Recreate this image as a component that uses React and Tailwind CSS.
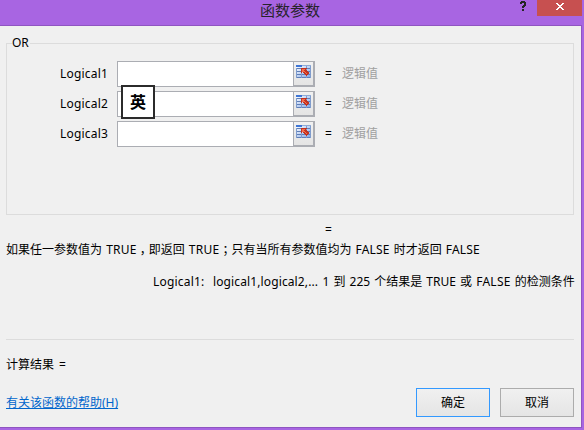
import React from "react";

function SheetIcon() {
  return (
    <svg width="15" height="14" viewBox="0 0 15 14" shapeRendering="crispEdges">
      <defs>
        <linearGradient id="sheet" x1="0" y1="0" x2="1" y2="1">
          <stop offset="0" stopColor="#ffffff" />
          <stop offset="1" stopColor="#7da3e6" />
        </linearGradient>
      </defs>
      <rect x="0" y="1" width="15" height="12" fill="url(#sheet)" />
      <path d="M0 0h6v2H0z" fill="#3f76d6" />
      <path d="M6 0h9v1H6z" fill="#8eabd8" />
      <path d="M0 3h15v1H0zM0 6h15v1H0zM0 9h15v1H0zM0 12h15v1H0z" fill="#5f7fb8" />
      <path d="M5 3h1v10H5zM10 1h1v12h-1zM14 1h1v12h-1zM0 3h1v10H0z" fill="#7f9ccd" />
      <path d="M5 3h6v1h-1v1h1v1h1v1h1v2h-1v1h-1v1h-1v-1H9V9H8V8H7V7H6v1H5z" fill="#c3321f" />
      <path d="M6 4h3v1H8v1h1v1h1v1h1v1h-1V8H9V7H6z" fill="#f16d50" />
    </svg>
  );
}

function ArgumentRow({ name, children }) {
  return (
    <div className="flex h-[26px] items-center">
      <span className="w-[53px] shrink-0 whitespace-nowrap tracking-[0.2px]">{name}</span>
      <div className="relative ml-1 flex h-[26px] w-[198px] shrink-0 border border-[#abadb3] bg-white">
        <span className="-mr-px -mt-px ml-auto flex h-[26px] w-[22px] justify-center border-t border-r-2 border-b-2 border-l border-[#abadb3] bg-gradient-to-b from-[#f1f1f1] to-[#e4e4e4] pt-[3px]">
          <SheetIcon />
        </span>
        {children}
      </div>
      <span className="ml-[10px] w-[17px]">=</span>
      <span className="text-[#a0a0a0]">逻辑值</span>
    </div>
  );
}

export default function App() {
  return (
    <div className="flex h-[430px] w-[584px] flex-col overflow-hidden bg-[#a865e2] font-['Noto_Sans','Noto_Sans_CJK_SC',sans-serif] text-[12px] leading-4 text-black" lang="zh-CN">
      <header className="flex h-[25px] shrink-0 items-start">
        <h1 className="ml-[260px] w-[252px] text-[15px] leading-5 font-normal text-[#27232b]">函数参数</h1>
        <svg className="ml-[8px] mt-px" width="6" height="11" viewBox="0 0 6 11" shapeRendering="crispEdges" fill="#252525">
          <path d="M1 0h4v1h1v4H5v1H4v1H2V5h1V4h1V2H2v1H0V1h1zM2 8h2v2H2z" />
        </svg>
        <button className="ml-[11px] flex h-4 w-[45px] justify-center bg-[#c75050] pt-[3px]">
          <svg width="8" height="7" viewBox="0 0 8 7" shapeRendering="crispEdges" fill="#fff">
            <path d="M0 0h2v1h1v1h2V1h1V0h2v1H7v1H6v1H5v1h1v1h1v1h1v1H6V6H5V5H3v1H2v1H0V6h1V5h1V4h1V3H2V2H1V1H0z" />
          </svg>
        </button>
      </header>

      <main className="flex h-[403px] w-[582px] shrink-0 flex-col border-t border-r border-b border-[#8f55c1] bg-[#f0f0f0] pl-[6px]">
        <fieldset className="mt-[9px] h-[180px] w-[568px] shrink-0 border border-[#dcdcdc] pl-[53px]">
          <legend className="-ml-[48px] pr-px leading-4">OR</legend>
          <div className="mt-[10px] flex flex-col gap-1">
            <ArgumentRow name="Logical1" />
            <ArgumentRow name="Logical2">
              <span className="absolute -top-[7px] left-[3px] z-10 flex h-[34px] w-[34px] items-center justify-center border-2 border-[#2b2b2b] bg-white pb-[3px] font-['Noto_Sans_CJK_SC',sans-serif] text-[16px] leading-none font-bold">英</span>
            </ArgumentRow>
            <ArgumentRow name="Logical3" />
          </div>
        </fieldset>
        <p className="mt-[7px] h-4 pl-[319px]">=</p>
        <p className="mt-1 whitespace-nowrap [word-spacing:1px]">
          如果任一参数值为 <span className="tracking-[0.25px]">TRUE</span>
          <span className="px-[3px] [font-feature-settings:'halt']">，</span>即返回 <span className="tracking-[0.25px]">TRUE</span>
          <span className="px-[3px] [font-feature-settings:'halt']">；</span>只有当所有参数值均为 <span className="tracking-[0.15px]">FALSE</span> 时才返回 <span className="tracking-[0.15px]">FALSE</span>
        </p>
        <p className="mt-4 flex pl-[147px] whitespace-nowrap [word-spacing:1px]">
          <span className="w-[60px] shrink-0 tracking-[0.2px]">Logical1:</span>
          <span>
            <span className="tracking-[0.12px]">logical1,logical2,... </span>1 到 225 个结果是 TRUE 或 <span className="tracking-[0.25px]">FALSE</span> 的检测条件
          </span>
        </p>
        <hr className="mt-[49px] w-[568px] border-[#dcdcdc]" />
        <p className="mt-[17px] [word-spacing:2px]">计算结果 =</p>
        <div className="mt-[15px] flex h-[29px] w-[568px] shrink-0 items-center">
          <a className="whitespace-nowrap text-[#0066cc] underline [text-decoration-skip-ink:none]">有关该函数的帮助(H)</a>
          <button className="ml-auto h-[29px] w-[74px] border border-[#3399ff] bg-gradient-to-b from-[#f0f0f0] to-[#e5e5e5]">确定</button>
          <button className="ml-[10px] h-[29px] w-[74px] border border-[#acacac] bg-gradient-to-b from-[#f0f0f0] to-[#e5e5e5]">取消</button>
        </div>
      </main>
    </div>
  );
}
